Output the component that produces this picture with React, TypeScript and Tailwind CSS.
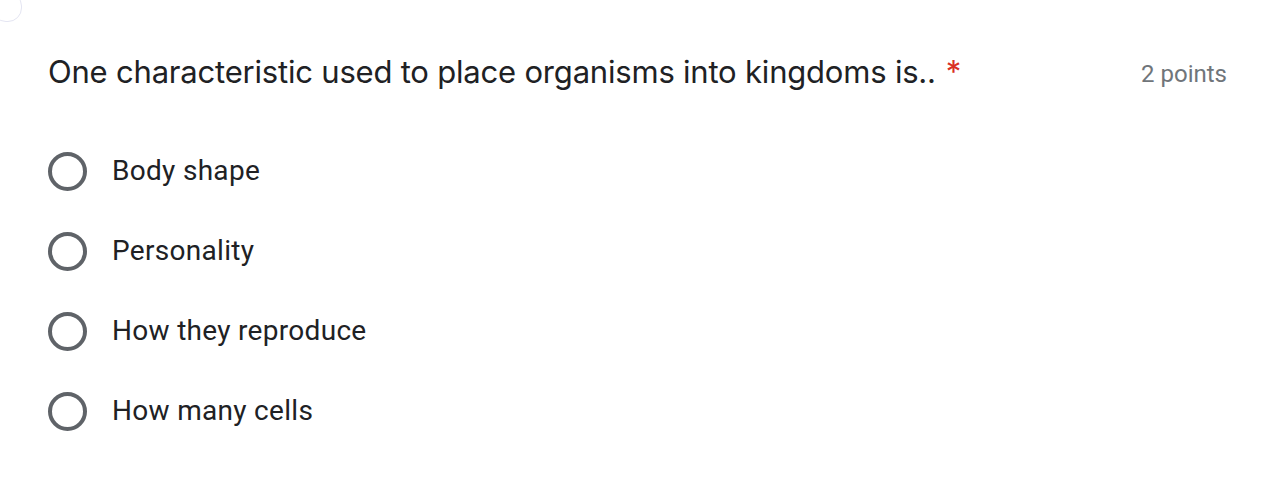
const options = ['Body shape', 'Personality', 'How they reproduce', 'How many cells']

function Radio() {
  return <div className="w-[39px] h-[39px] rounded-full border-[4px] border-[#5f6368] shrink-0" />
}

export default function App() {
  return (
    <div className="w-[1261px] h-[480px] bg-white overflow-hidden relative font-['Roboto',sans-serif]">
      {/* card corner */}
      <div className="absolute -left-[8px] -top-[8px] w-[30px] h-[30px] rounded-[14px] border border-[#e4e5f2]" />
      <div className="pl-[48px] pr-[34px] pt-[50px]">
        <div className="flex items-start justify-between">
          <div className="text-[31px] leading-[44px] text-[#202124] font-['Inter',sans-serif] tracking-[-0.2px]">
            One characteristic used to place organisms into kingdoms is..
            <span className="text-[#d93025] ml-[10px]">*</span>
          </div>
          <div className="text-[24px] leading-[44px] text-[#70757a] mt-[2px]">2 points</div>
        </div>
        <div className="mt-[35px] flex flex-col">
          {options.map((o) => (
            <div key={o} className="flex items-center h-[80px] gap-[25px]">
              <Radio />
              <span className="text-[28px] text-[#202124] tracking-[0.3px]">{o}</span>
            </div>
          ))}
        </div>
      </div>
    </div>
  )
}
